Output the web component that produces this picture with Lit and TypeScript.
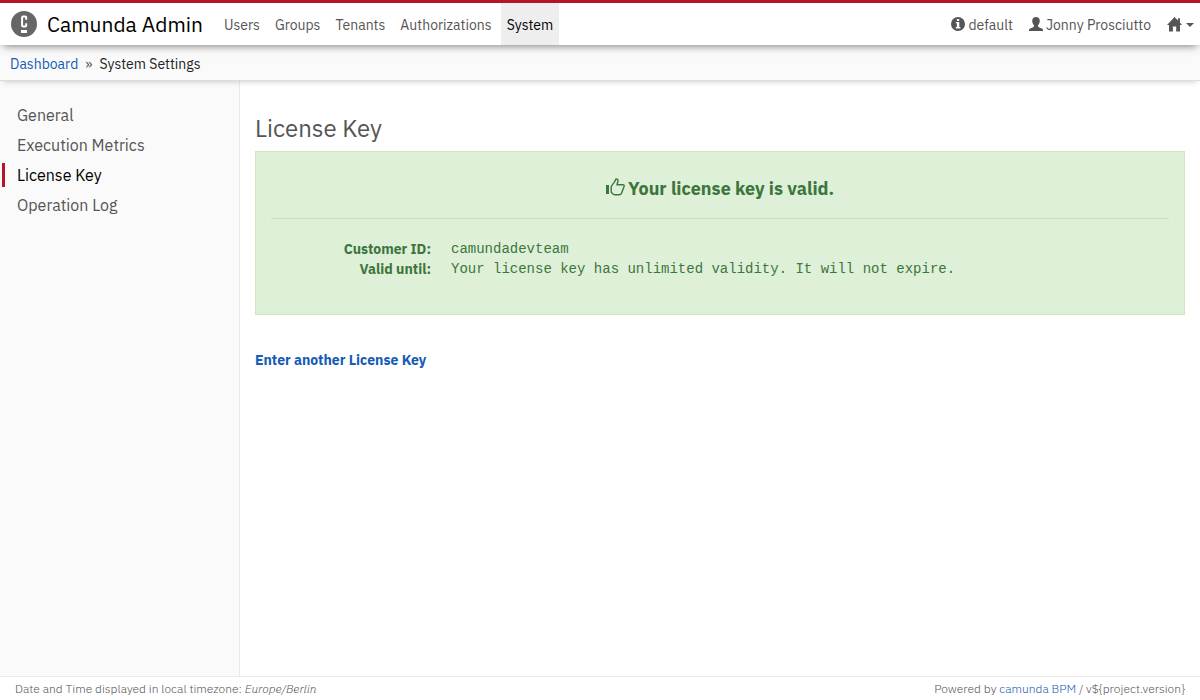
import { LitElement, html, css, svg } from "lit";
import { customElement, state } from "lit/decorators.js";

interface Entry {
  id: string;
  label: string;
}

const SECTIONS: Entry[] = [
  { id: "users", label: "Users" },
  { id: "groups", label: "Groups" },
  { id: "tenants", label: "Tenants" },
  { id: "authorizations", label: "Authorizations" },
  { id: "system", label: "System" },
];

const SETTINGS: Entry[] = [
  { id: "general", label: "General" },
  { id: "execution-metrics", label: "Execution Metrics" },
  { id: "license-key", label: "License Key" },
  { id: "operation-log", label: "Operation Log" },
];

const logo = svg`<svg class="logo" viewBox="0 0 26 26" aria-hidden="true">
  <circle cx="13" cy="13" r="13" fill="#666"/>
  <path d="M15.200 8.800V6.600c0-.7-.4-1.100-1.100-1.100h-1.900c-.7 0-1.100.4-1.100 1.100v7.800c0 .7.4 1.100 1.100 1.100h1.900c.7 0 1.100-.4 1.100-1.100v-2.200" fill="none" stroke="#fff" stroke-width="2"/>
  <path d="M10 19h6v3h-6z" fill="#fff"/>
</svg>`;

const infoIcon = svg`<svg class="icon" viewBox="0 0 14 14" aria-hidden="true">
  <path fill="currentColor" fill-rule="evenodd" d="M7 0a7 7 0 1 1 0 14A7 7 0 0 1 7 0zM5.900 2v2h2.300V2zM4.800 5v1.300h1.100v3.700H4.800v1.500h4.600V10H8.300V5z"/>
</svg>`;

const userIcon = svg`<svg class="icon" viewBox="0 0 14 14" aria-hidden="true">
  <path fill="currentColor" d="M7 0c2.300 0 3.800 1.500 3.800 3.800 0 1.800-.7 3.400-1.700 4.400v1c0 .5.3.8.8 1l2.800 1.200c.8.3 1.300.8 1.300 1.600v1H0v-1c0-.8.5-1.300 1.300-1.600l2.800-1.200c.5-.2.8-.5.8-1v-1C3.900 7.200 3.200 5.600 3.200 3.800 3.200 1.500 4.700 0 7 0z"/>
</svg>`;

const homeIcon = svg`<svg class="home" viewBox="0 0 15 15" aria-hidden="true">
  <path fill="currentColor" d="M7.500 0 11 3.600V1.200h1.900v4.400L15 8h-2v6.500H9.200V9.500H5.900v5H2V8H0z"/>
</svg>`;

const thumbIcon = svg`<svg class="thumb" viewBox="0 0 19 18" aria-hidden="true">
  <path fill="currentColor" d="M0 7h3v9H0z"/>
  <path fill="none" stroke="currentColor" stroke-width="1.400" stroke-linejoin="round" d="M5.200 8.300 8.900 3.400 9.600 1.500C9.900.8 11 .8 11.600 1.500c.5.6.5 1.300.2 2.300L11 6.800h6.100c.8 0 1.200.6 1.100 1.300l-.6 1.700-2 5.200c-.4 1.100-1.200 1.800-2.400 1.800H9.100c-.8 0-1.500-.3-2.100-.9l-1.800-1.700z"/>
</svg>`;

@customElement("app-root")
export class AppRoot extends LitElement {
  static styles = css`
    :host {
      display: flex;
      flex-direction: column;
      min-height: 100vh;
      font: 14px/20px "IBM Plex Sans", Roboto, "Liberation Sans", sans-serif;
      color: #555;
      background: #fff;
    }
    * {
      box-sizing: border-box;
    }
    a {
      color: #155cb5;
      text-decoration: none;
    }
    ul,
    ol,
    dl,
    dd,
    h1,
    h2,
    h3 {
      margin: 0;
      padding: 0;
      list-style: none;
    }
    .header {
      display: flex;
      border-top: 3px solid #b5152b;
      height: 45px;
      background: #fff;
      box-shadow: 0 4px 8px -3px rgba(0, 0, 0, 0.5);
      position: relative;
      z-index: 2;
    }
    .brand {
      display: flex;
      align-items: center;
      gap: 10px;
      padding: 0 15px 0 11px;
      font-size: 21px;
      color: #000;
    }
    .logo {
      width: 26px;
      height: 26px;
    }
    .nav,
    .tools {
      display: flex;
    }
    .tools {
      margin-left: auto;
      gap: 4px;
    }
    .nav {
      gap: 3px;
    }
    .nav a,
    .tool {
      display: flex;
      align-items: center;
      gap: 3px;
      height: 42px;
      padding: 2px 6px 0;
      border: 0;
      background: none;
      font: inherit;
      color: #555;
      cursor: pointer;
    }
    .nav a.active {
      background: #eee;
      color: #000;
    }
    .icon {
      width: 14px;
      height: 14px;
      margin-bottom: 2px;
    }
    .home {
      width: 15px;
      height: 15px;
      margin-bottom: 2px;
    }
    .caret {
      margin-left: 1px;
      border: 4px solid transparent;
      border-top-color: currentColor;
      border-bottom: 0;
    }
    .crumbs {
      display: flex;
      gap: 7px;
      padding: 9px 10px 6px;
      background: #fafafa;
      border-bottom: 1px solid #ddd;
      box-shadow: 0 3px 6px -3px rgba(0, 0, 0, 0.25);
      position: relative;
      z-index: 1;
    }
    .crumbs .here {
      color: #222;
    }
    .body {
      flex: 1;
      display: grid;
      grid-template-columns: 1fr 4fr;
    }
    .side {
      background: #fafafa;
      border-right: 1px solid #eaeaea;
      padding: 19px 2px;
    }
    .side li {
      padding: 3px 0;
    }
    .side a {
      display: block;
      padding-left: 12px;
      border-left: 3px solid transparent;
      font-size: 16px;
      line-height: 24px;
      color: #555;
    }
    .side a.active {
      border-color: #b5152b;
      color: #000;
    }
    .main {
      padding: 33px 15px 15px;
    }
    .title {
      font-size: 24px;
      line-height: 28px;
      font-weight: 400;
      margin-bottom: 9px;
    }
    .notice {
      padding: 23px 15px 35px;
      border: 1px solid #d0e5bf;
      background: #dff0d8;
      color: #3c763d;
    }
    .valid {
      display: flex;
      justify-content: center;
      align-items: center;
      gap: 3px;
      padding-bottom: 15px;
      border-bottom: 1px solid #c9e2b3;
      font-size: 18px;
      line-height: 28px;
    }
    .thumb {
      width: 19px;
      height: 18px;
      margin-bottom: 4px;
    }
    .facts {
      display: grid;
      grid-template-columns: 160px 1fr;
      column-gap: 20px;
      margin-top: 20px;
    }
    .facts dt {
      font-weight: 700;
      text-align: right;
    }
    .facts dd {
      font-family: "Liberation Mono", monospace;
    }
    .another {
      display: inline-block;
      margin-top: 35px;
      font-weight: 700;
    }
    .footer {
      display: flex;
      justify-content: space-between;
      border-top: 1px solid #eaeaea;
      padding: 2px 15px 1px;
      font-size: 12px;
      font-weight: 300;
      color: #555;
    }
  `;

  @state() private section = "system";
  @state() private setting = "license-key";

  private links(entries: Entry[], current: string, pick: (id: string) => void) {
    return entries.map(
      (e) => html`<li>
        <a
          href="#${e.id}"
          class=${e.id === current ? "active" : ""}
          @click=${() => pick(e.id)}
          >${e.label}</a
        >
      </li>`
    );
  }

  render() {
    return html`
      <header class="header">
        <a class="brand" href="#home">${logo}<span>Camunda Admin</span></a>
        <nav aria-label="Main">
          <ul class="nav">
            ${this.links(SECTIONS, this.section, (id) => (this.section = id))}
          </ul>
        </nav>
        <div class="tools">
          <button class="tool" type="button">${infoIcon}<span>default</span></button>
          <button class="tool" type="button">${userIcon}<span>Jonny Prosciutto</span></button>
          <button class="tool" type="button" aria-label="Applications">
            ${homeIcon}<span class="caret"></span>
          </button>
        </div>
      </header>
      <nav aria-label="Breadcrumb">
        <div class="crumbs">
          <a href="#dashboard">Dashboard</a>
          <span>»</span>
          <span class="here">System Settings</span>
        </div>
      </nav>
      <div class="body">
        <aside class="side">
          <ul>
            ${this.links(SETTINGS, this.setting, (id) => (this.setting = id))}
          </ul>
        </aside>
        <main class="main">
          <h1 class="title">License Key</h1>
          <section class="notice">
            <h3 class="valid">${thumbIcon}<span>Your license key is valid.</span></h3>
            <dl class="facts">
              <dt>Customer ID:</dt>
              <dd>camundadevteam</dd>
              <dt>Valid until:</dt>
              <dd>Your license key has unlimited validity. It will not expire.</dd>
            </dl>
          </section>
          <a class="another" href="#enter-license">Enter another License Key</a>
        </main>
      </div>
      <footer class="footer">
        <span>Date and Time displayed in local timezone: <em>Europe/Berlin</em></span>
        <span>Powered by <a href="#camunda">camunda BPM</a> / v\${project.version}</span>
      </footer>
    `;
  }
}
